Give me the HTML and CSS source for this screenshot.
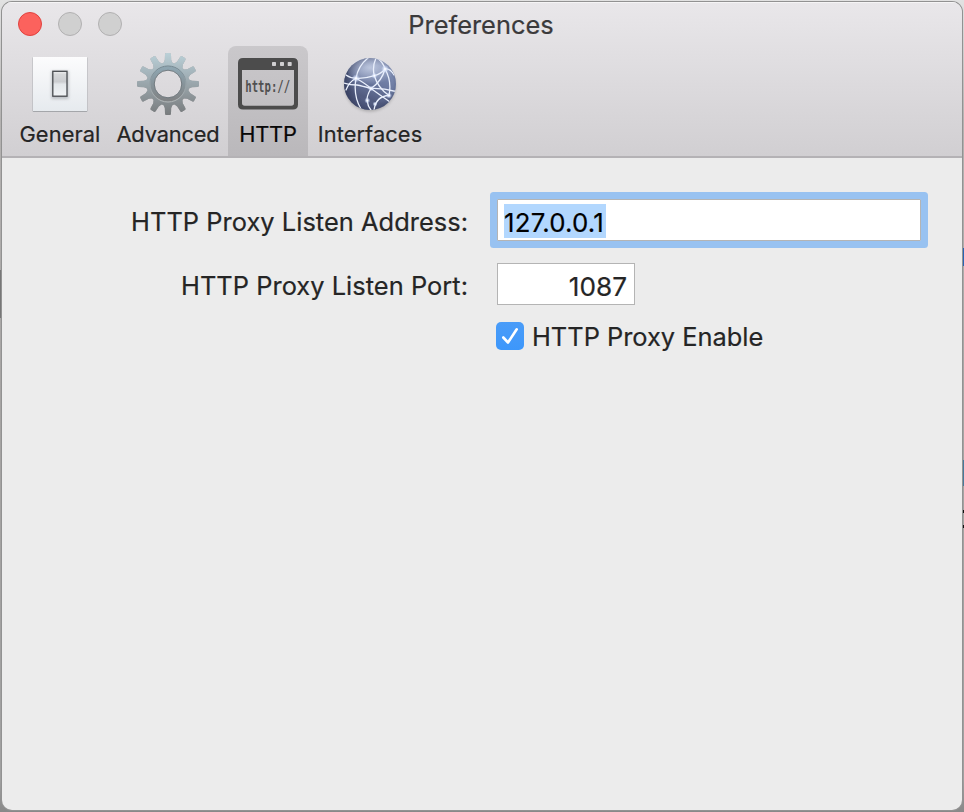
FILE: index.html
```html
<!DOCTYPE html>
<html lang="en">
<head>
<meta charset="utf-8">
<title>Preferences</title>
<link rel="stylesheet" href="styles.css">
</head>
<body>
<main class="window">
  <header class="header">
    <div class="titlebar">
      <div class="lights"><span class="light close"></span><span class="light"></span><span class="light"></span></div>
      <h1 class="title">Preferences</h1>
    </div>
    <nav class="toolbar">
      <a class="tab general">
        <svg class="icon" width="64" height="64" viewBox="0 0 64 64">
          <defs>
            <linearGradient id="plate" x1="0" y1="0" x2="0" y2="1"><stop offset="0" stop-color="#fcfcfd"/><stop offset="1" stop-color="#e6eaee"/></linearGradient>
            <linearGradient id="rocker" x1="0" y1="0" x2="0" y2="1"><stop offset="0" stop-color="#f0f1f2"/><stop offset=".12" stop-color="#d6d8da"/><stop offset=".42" stop-color="#cbcdd0"/><stop offset=".52" stop-color="#e3e7ea"/><stop offset="1" stop-color="#f0f3f5"/></linearGradient>
            <filter id="soft" x="-50%" y="-50%" width="200%" height="200%"><feGaussianBlur stdDeviation="1.5"/></filter>
          </defs>
          <rect x="4.600" y="5" width="54.800" height="55" rx="1" fill="#a4a6aa"/>
          <rect x="5" y="5" width="54" height="54" fill="url(#plate)"/>
          <rect x="23.500" y="19" width="17" height="28" fill="#8a8f94" opacity=".5" filter="url(#soft)"/>
          <rect x="24.800" y="19.300" width="14.200" height="24.900" fill="url(#rocker)" stroke="#484b4f" stroke-width="1.300"/>
        </svg>
        <span>General</span>
      </a>
      <a class="tab">
        <svg class="icon" width="64" height="64" viewBox="0 0 64 64">
          <defs>
            <linearGradient id="steel" x1="0" y1="0" x2="0" y2="1"><stop offset="0" stop-color="#bcd2d9"/><stop offset=".35" stop-color="#a3b2b9"/><stop offset=".7" stop-color="#8c9498"/><stop offset="1" stop-color="#777a7c"/></linearGradient>
            <linearGradient id="bevel" x1="0" y1="0" x2="0" y2="1"><stop offset="0" stop-color="#71858f"/><stop offset="1" stop-color="#b2b6b7"/></linearGradient>
            <linearGradient id="ring" x1="0" y1="0" x2="0" y2="1"><stop offset="0" stop-color="#8ea5b0"/><stop offset="1" stop-color="#808385"/></linearGradient>
            <path id="tooth" d="M26.5 13 L28.8 8 L29 2.5 Q29 1 30.4 1 H33.6 Q35 1 35 2.5 L35.2 8 L37.5 13Z"/>
            <clipPath id="gear">
              <circle cx="32" cy="32" r="21.5"/>
              <use href="#tooth"/><use href="#tooth" transform="rotate(30 32 32)"/><use href="#tooth" transform="rotate(60 32 32)"/><use href="#tooth" transform="rotate(90 32 32)"/><use href="#tooth" transform="rotate(120 32 32)"/><use href="#tooth" transform="rotate(150 32 32)"/><use href="#tooth" transform="rotate(180 32 32)"/><use href="#tooth" transform="rotate(210 32 32)"/><use href="#tooth" transform="rotate(240 32 32)"/><use href="#tooth" transform="rotate(270 32 32)"/><use href="#tooth" transform="rotate(300 32 32)"/><use href="#tooth" transform="rotate(330 32 32)"/>
            </clipPath>
          </defs>
          <g class="gear-body">
            <path clip-path="url(#gear)" fill="url(#steel)" fill-rule="evenodd" d="M0 0H64V64H0ZM32 18.3a13.7 13.7 0 1 0 0 27.4a13.7 13.7 0 1 0 0 -27.4Z"/>
            <circle cx="32" cy="32" r="15.8" fill="none" stroke="url(#ring)" stroke-width="3.6"/>
            <circle cx="32" cy="32" r="18" fill="none" stroke="url(#bevel)" stroke-width="1"/>
            <circle cx="32" cy="32" r="13.8" fill="none" stroke="#677177" stroke-width=".8"/>
          </g>
        </svg>
        <span>Advanced</span>
      </a>
      <a class="tab selected">
        <svg class="icon" width="64" height="64" viewBox="0 0 64 64">
          <path fill="#4c4c4c" fill-rule="evenodd" d="M7 6H57Q62 6 62 11V52.500Q62 57.500 57 57.500H7Q2 57.500 2 52.500V11Q2 6 7 6ZM6 18V51Q6 53.700 8.700 53.700H55.300Q58 53.700 58 51V18Z"/>
          <g fill="#d0cfd1"><rect x="36" y="10" width="4" height="4" rx=".7"/><rect x="44" y="10" width="4" height="4" rx=".7"/><rect x="51.700" y="10" width="4" height="4" rx=".7"/></g>
          <text class="icon-text" transform="translate(9.300 40) scale(.71 1)">http://</text>
        </svg>
        <span>HTTP</span>
      </a>
      <a class="tab interfaces">
        <svg class="icon" width="64" height="64" viewBox="0 0 64 64">
          <defs>
            <linearGradient id="sphere" x1=".7" y1="0" x2=".3" y2="1"><stop offset="0" stop-color="#8796bb"/><stop offset=".45" stop-color="#6b79a0"/><stop offset=".75" stop-color="#525c80"/><stop offset="1" stop-color="#566086"/></linearGradient>
            <radialGradient id="shade" cx=".58" cy=".5" r=".56"><stop offset=".65" stop-color="#2c3457" stop-opacity="0"/><stop offset="1" stop-color="#2b3250" stop-opacity=".6"/></radialGradient>
            <radialGradient id="gloss" cx=".5" cy=".35" r=".6"><stop offset="0" stop-color="#e0e7f7" stop-opacity=".65"/><stop offset="1" stop-color="#e0e7f7" stop-opacity="0"/></radialGradient>
            <radialGradient id="node"><stop offset=".1" stop-color="#fff"/><stop offset=".45" stop-color="#dfe9ff" stop-opacity=".7"/><stop offset="1" stop-color="#cddcff" stop-opacity="0"/></radialGradient>
            <clipPath id="disc"><circle cx="32" cy="32" r="26"/></clipPath>
          </defs>
          <ellipse cx="32" cy="34" rx="25.500" ry="25.500" fill="#555" opacity=".35" filter="url(#soft)"/>
          <circle cx="32" cy="32" r="26" fill="url(#sphere)"/>
          <circle cx="32" cy="32" r="26" fill="url(#shade)"/>
          <ellipse cx="32" cy="20" rx="22" ry="14" fill="url(#gloss)"/>
          <g clip-path="url(#disc)" fill="none" stroke="#e9effc" stroke-width="1.300" stroke-linecap="round">
            <path d="M30 6Q20 14 18 26.300Q15 44 23 57"/>
            <path d="M8 38Q11 30 18 26.300"/>
            <path d="M8 23Q12 26 18 26.300Q26 27 36.300 23.700Q43 22 47 17Q52 16 56 23"/>
            <path d="M6 31Q12 33 19 33Q24 34 33 36.500Q45 36 58 39.500"/>
            <path d="M18 26.300Q28 32 33 36.500Q42 43 52 50"/>
            <path d="M38 6Q34 15 36.300 23.700Q40 36 51 43.500"/>
            <path d="M39 6Q45 10 47 17Q44 29 33 36.500Q28 45 29.300 49.300Q30 55 33 58"/>
            <path d="M47 17Q54 29 51 43.500Q38 44 36 58"/>
          </g>
          <g fill="url(#node)"><circle cx="18" cy="26.300" r="4"/><circle cx="47" cy="17" r="4"/><circle cx="36.300" cy="23.700" r="3"/><circle cx="33" cy="36.500" r="3"/><circle cx="29.300" cy="48.500" r="3"/><circle cx="51" cy="43.500" r="3"/><circle cx="37" cy="52" r="2.500"/></g>
        </svg>
        <span>Interfaces</span>
      </a>
    </nav>
  </header>
  <form class="form">
    <label class="label">HTTP Proxy Listen Address:</label>
    <div class="field address"><span class="selection">127.0.0.1</span></div>
    <label class="label">HTTP Proxy Listen Port:</label>
    <div class="field port"><span>1087</span></div>
    <div class="check">
      <svg class="box" width="28" height="28" viewBox="0 0 28 28"><defs><linearGradient id="blue" x1="0" y1="0" x2="0" y2="1"><stop offset="0" stop-color="#4a9cf8"/><stop offset="1" stop-color="#3d97fb"/></linearGradient></defs><rect width="28" height="28" rx="5" fill="url(#blue)"/><path d="M7.300 15.500L12 20.500L20.700 7.300" fill="none" stroke="#fff" stroke-width="2.600" stroke-linecap="round" stroke-linejoin="round"/></svg>
      <span class="check-label">HTTP Proxy Enable</span>
    </div>
  </form>
</main>
</body>
</html>
```
FILE: styles.css
```css
* { box-sizing: border-box; }
body {
  margin: 0;
  width: 964px;
  height: 812px;
  padding: 2px;
  overflow: hidden;
  background:
    linear-gradient(transparent 248px, #2864b4 248px 266px, transparent 266px 460px, #477a9c 460px 486px, transparent 486px 510px, #111 510px 513px, transparent 513px 525px, #111 525px 528px, transparent 528px) right / 1px 100% no-repeat,
    linear-gradient(transparent 270px, #777 270px 318px, transparent 318px) left / 1px 100% no-repeat,
    linear-gradient(#e2e2e2 0, #b4b2b1 120px, #a6a4a3 400px, #a0a0a0 780px, #888 812px);
  font-family: Inter, "Liberation Sans", sans-serif;
  color: #252525;
  -webkit-text-stroke: .2px;
}
.window {
  width: 960px;
  height: 808px;
  border-radius: 10px;
  background: #ececec;
  box-shadow: 0 0 0 1px #929292;
  overflow: hidden;
}
.header {
  height: 156px;
  background: linear-gradient(#e9e7ea, #d1cfd2);
  border-bottom: 2px solid #b4b2b5;
  box-shadow: inset 0 1px #f6f5f6;
}
.titlebar {
  height: 44px;
  display: grid;
  grid-template-columns: 1fr auto 1fr;
  grid-template-rows: 44px;
  align-items: center;
}
.lights { display: flex; gap: 16px; padding-left: 16px; }
.light {
  width: 24px;
  height: 24px;
  border-radius: 50%;
  background: #d0d0d0;
  border: 1px solid #b1b0b1;
}
.close { background: #fc625d; border-color: #e0423f; }
.title {
  margin: 0 2px 0 0;
  padding-top: 2px;
  font-size: 25.400px;
  font-weight: 400;
  line-height: 42px;
  color: #3b3a3b;
}
.toolbar {
  display: grid;
  grid-template-columns: 96px 120px 80px 124px;
  padding-left: 10px;
  height: 110px;
}
.tab {
  display: flex;
  flex-direction: column;
  align-items: center;
  padding-top: 6px;
  font-size: 21.800px;
  letter-spacing: -.15px;
  line-height: 30px;
  white-space: nowrap;
}
.general { letter-spacing: .1px; }
.interfaces { letter-spacing: .1px; }
.tab span { margin-top: 3px; }
.selected { background: linear-gradient(#cac8cb, #bab8bb); border-radius: 8px 8px 0 0; color: #080808; }
.icon { display: block; flex: none; }
.icon-text { font: bold 15px "DejaVu Sans Mono", monospace; letter-spacing: 0; fill: #505050; -webkit-text-stroke: 0; }
.gear-body { filter: drop-shadow(0 .5px .5px #7778); }
.form {
  display: grid;
  grid-template-columns: 466px 1fr;
  grid-template-rows: 56px 42px 28px;
  column-gap: 20px;
  row-gap: 15px;
  padding: 34px 34px 0 0;
  font-size: 25.400px;
}
.label { text-align: right; white-space: nowrap; align-self: center; line-height: 32px; padding: 3px 0 0; letter-spacing: .04px; }
.field { background: #fff; border: 1px solid #b4b4b4; display: flex; align-items: center; height: 42px; }
.address {
  margin: 7px 7px 7px 9px;
  padding-left: 6px;
  box-shadow: 0 0 0 7px #98c2f1;
  border-radius: 1px;
  color: #000;
}
.selection { background: #b2d7fe; height: 34px; line-height: 37px; width: 102px; margin-top: 2px; white-space: nowrap; font-size: 25.800px; letter-spacing: .2px; }
.port { margin-left: 9px; width: 138px; justify-content: flex-end; padding-right: 7px; padding-top: 5px; font-size: 26.200px; }
.check { grid-column: 2; margin: 2px 0 -2px 8px; display: flex; gap: 8px; align-items: center; white-space: nowrap; }
.check-label { line-height: 28px; padding-top: 1px; }
.box { flex: none; }
```
